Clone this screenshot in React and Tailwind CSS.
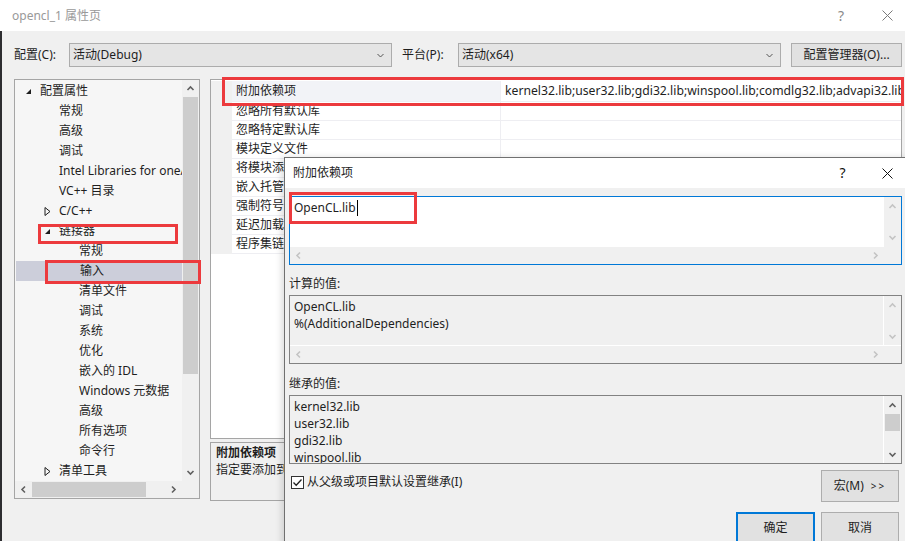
import React from "react";

const Chev = ({ dir = "down", color = "#606060", size = 9, w = 1.6 }) => {
  const pts = {
    up: "1.5,6 4.5,3 7.5,6",
    down: "1.5,3 4.5,6 7.5,3",
    left: "6,1.5 3,4.5 6,7.5",
    right: "3,1.5 6,4.5 3,7.5",
  }[dir];
  return (
    <svg width={size} height={size} viewBox="0 0 9 9">
      <polyline points={pts} fill="none" stroke={color} strokeWidth={w} />
    </svg>
  );
};

const XIcon = ({ color = "#333", size = 11 }) => (
  <svg width={size} height={size} viewBox="0 0 11 11">
    <path d="M0.5 0.5 L10.5 10.5 M10.5 0.5 L0.5 10.5" stroke={color} strokeWidth="1" fill="none" />
  </svg>
);

const TriOpen = () => (
  <svg width="7" height="7" viewBox="0 0 7 7">
    <polygon points="6,1 6,6 1,6" fill="#1e1e1e" />
  </svg>
);

const TriClosed = () => (
  <svg width="7" height="9" viewBox="0 0 7 9">
    <polygon points="1,0.5 6,4.5 1,8.5" fill="none" stroke="#1e1e1e" strokeWidth="1" />
  </svg>
);

const tree = [
  { t: "配置属性", l: 0, e: "open" },
  { t: "常规", l: 1 },
  { t: "高级", l: 1 },
  { t: "调试", l: 1 },
  { t: "Intel Libraries for oneAPI", l: 1 },
  { t: "VC++ 目录", l: 1 },
  { t: "C/C++", l: 1, e: "closed" },
  { t: "链接器", l: 1, e: "open" },
  { t: "常规", l: 2 },
  { t: "输入", l: 2, sel: true },
  { t: "清单文件", l: 2 },
  { t: "调试", l: 2 },
  { t: "系统", l: 2 },
  { t: "优化", l: 2 },
  { t: "嵌入的 IDL", l: 2 },
  { t: "Windows 元数据", l: 2 },
  { t: "高级", l: 2 },
  { t: "所有选项", l: 2 },
  { t: "命令行", l: 2 },
  { t: "清单工具", l: 1, e: "closed" },
];

const indent = ["pl-[10px]", "pl-[29px]", "pl-[49px]"];

const gridRows = [
  "附加依赖项",
  "忽略所有默认库",
  "忽略特定默认库",
  "模块定义文件",
  "将模块添加到程序集",
  "嵌入托管资源文件",
  "强制符号引用",
  "延迟加载的 DLL",
  "程序集链接资源",
];

export default function App() {
  return (
    <div className="relative h-[541px] w-[905px] overflow-hidden bg-[#f0f0f0] font-['Noto_Sans','Noto_Sans_CJK_SC',sans-serif] text-[12px] leading-[16px] text-[#1e1e1e]">
      {/* main title bar */}
      <div className="flex h-[31px] items-center bg-white pl-[12px]">
        <span className="text-[#999999]">opencl_1 属性页</span>
        <div className="ml-auto mr-[-5px] flex items-center">
          <span className="w-[46px] text-center text-[14px] text-[#8a8a8a]">?</span>
          <span className="flex w-[46px] justify-center">
            <XIcon color="#7a7a7a" />
          </span>
        </div>
      </div>

      {/* body */}
      <div className="flex h-[510px] flex-col border-l-[2px] border-[#2d2d30] pl-[12px]">
        {/* config row */}
        <div className="mt-[12px] flex h-[24px] items-center">
          <span className="w-[55px]">配置(C):</span>
          <div className="flex h-[24px] w-[323px] items-center border border-[#acacac] bg-[#e5e5e5] pl-[3px] pr-[6px]">
            <span>活动(Debug)</span>
            <span className="ml-auto">
              <Chev dir="down" color="#555" w={1} />
            </span>
          </div>
          <span className="ml-[10px] w-[56px]">平台(P):</span>
          <div className="flex h-[24px] w-[323px] items-center border border-[#acacac] bg-[#e5e5e5] pl-[3px] pr-[6px]">
            <span>活动(x64)</span>
            <span className="ml-auto">
              <Chev dir="down" color="#555" w={1} />
            </span>
          </div>
          <div className="ml-[10px] flex h-[24px] w-[111px] items-center justify-center border border-[#adadad] bg-[#e1e1e1]">
            配置管理器(O)...
          </div>
        </div>

        {/* content */}
        <div className="mt-[12px] flex">
          {/* tree */}
          <div className="flex h-[420px] w-[186px] flex-col border border-[#a5a5a5] bg-[#f6f6f6]">
            <div className="flex h-[401px]">
              <div className="w-[167px] overflow-hidden pt-[1px]">
                {tree.map((r, i) => (
                  <div
                    key={i}
                    className={
                      "flex h-[20px] items-center whitespace-nowrap " +
                      indent[r.l] +
                      (r.sel ? " ml-[1px] bg-[#ccceda]" : "")
                    }
                  >
                    <span className="flex w-[15px] shrink-0 items-center">
                      {r.e === "open" ? <TriOpen /> : r.e === "closed" ? <TriClosed /> : null}
                    </span>
                    <span className="shrink-0">{r.t}</span>
                  </div>
                ))}
              </div>
              <div className="flex w-[17px] flex-col bg-[#f0f0f0]">
                <div className="flex h-[17px] items-center justify-center">
                  <Chev dir="up" color="#606060" />
                </div>
                <div className="mx-[1px] h-[277px] bg-[#cdcdcd]" />
                <div className="mt-auto flex h-[17px] items-center justify-center">
                  <Chev dir="down" color="#606060" />
                </div>
              </div>
            </div>
            <div className="flex h-[17px] bg-[#f0f0f0]">
              <div className="flex w-[17px] items-center justify-center">
                <Chev dir="left" color="#606060" />
              </div>
              <div className="my-[1px] w-[114px] bg-[#cdcdcd]" />
              <div className="ml-auto mr-[17px] flex w-[17px] items-center justify-center">
                <Chev dir="right" color="#606060" />
              </div>
            </div>
          </div>

          {/* right column */}
          <div className="ml-[10px] flex w-[692px] flex-col">
            <div className="h-[360px] border border-[#a5a5a5] bg-white pt-[1px]">
              {gridRows.map((n, i) => (
                <div key={i} className={"flex " + (i === 0 ? "h-[21px]" : "h-[19px]")}>
                  <div className="w-[21px] bg-[#f0f0f0]" />
                  <div
                    className={
                      "flex w-[268px] items-center overflow-hidden whitespace-nowrap border-b border-[#eeeef2] pl-[4px] " +
                      (i === 0 ? "bg-[#f2f3f7]" : "")
                    }
                  >
                    {n}
                  </div>
                  <div className="flex flex-1 items-center overflow-hidden whitespace-nowrap border-b border-l border-[#eeeef2] pl-[4px] text-[12.2px]">
                    {i === 0
                      ? "kernel32.lib;user32.lib;gdi32.lib;winspool.lib;comdlg32.lib;advapi32.lib;shell32.lib;ole32.lib"
                      : ""}
                  </div>
                </div>
              ))}
            </div>
            <div className="mt-[3px] h-[59px] border border-[#a5a5a5] bg-[#f0f0f0] pl-[5px] pt-[1px] leading-[17px]">
              <div className="font-bold">附加依赖项</div>
              <div>指定要添加到链接命令行的其他项。</div>
            </div>
          </div>
        </div>
      </div>

      {/* red annotations on main window */}
      <div className="absolute left-[222px] top-[77px] h-[29px] w-[682px] border-[3px] border-[#ec3a3d]" />
      <div className="absolute left-[38px] top-[224px] h-[20px] w-[140px] border-[3px] border-[#ec3a3d]" />
      <div className="absolute left-[45px] top-[260px] h-[24px] w-[156px] border-[3px] border-[#ec3a3d]" />

      {/* dialog */}
      <div className="absolute left-[284px] top-[157px] h-[390px] w-[625px] border border-[#707070] bg-[#f0f0f0] shadow-[-3px_0_6px_rgba(0,0,0,0.12)]">
        <div className="flex h-[30px] items-center bg-white pl-[8px]">
          <span>附加依赖项</span>
          <div className="ml-auto mr-[-2px] flex items-center">
            <span className="w-[45px] text-center text-[14px] text-[#111]">?</span>
            <span className="flex w-[45px] justify-center">
              <XIcon color="#111" />
            </span>
          </div>
        </div>

        <div className="pl-[4px]">
          {/* edit box */}
          <div className="mt-[8px] flex h-[69px] w-[613px] flex-col border border-[#0078d7] bg-white">
            <div className="flex h-[50px]">
              <div className="flex flex-1 items-start pl-[4px] pt-[2px] leading-[17px]">
                <span>OpenCL.lib</span>
                <span className="ml-[1px] mt-[1px] h-[16px] w-[1px] bg-black" />
              </div>
              <div className="flex w-[17px] flex-col bg-[#f0f0f0]">
                <div className="mt-[1px] flex h-[17px] items-center justify-center">
                  <Chev dir="up" color="#c4c4c4" />
                </div>
                <div className="mb-[1px] mt-auto flex h-[17px] items-center justify-center">
                  <Chev dir="down" color="#c4c4c4" />
                </div>
              </div>
            </div>
            <div className="flex h-[17px] bg-[#f0f0f0]">
              <div className="flex w-[17px] items-center justify-center">
                <Chev dir="left" color="#c4c4c4" />
              </div>
              <div className="ml-auto mr-[17px] flex w-[17px] items-center justify-center">
                <Chev dir="right" color="#c4c4c4" />
              </div>
            </div>
          </div>

          {/* computed */}
          <div className="mt-[10px] h-[17px] leading-[17px]">计算的值:</div>
          <div className="mt-[3px] flex h-[69px] w-[613px] flex-col border border-[#828282] bg-[#f0f0f0]">
            <div className="flex h-[49px]">
              <div className="flex-1 border-r border-white pl-[4px] pt-[2px] leading-[17px]">
                <div>OpenCL.lib</div>
                <div>%(AdditionalDependencies)</div>
              </div>
              <div className="flex w-[17px] flex-col">
                <div className="mt-[1px] flex h-[17px] items-center justify-center">
                  <Chev dir="up" color="#c4c4c4" />
                </div>
                <div className="mt-auto flex h-[17px] items-center justify-center">
                  <Chev dir="down" color="#c4c4c4" />
                </div>
              </div>
            </div>
            <div className="flex h-[18px] border-t border-white">
              <div className="flex w-[17px] items-center justify-center">
                <Chev dir="left" color="#c4c4c4" />
              </div>
              <div className="ml-auto mr-[17px] flex w-[17px] items-center justify-center">
                <Chev dir="right" color="#c4c4c4" />
              </div>
            </div>
          </div>

          {/* inherited */}
          <div className="mt-[11px] h-[17px] leading-[17px]">继承的值:</div>
          <div className="mt-[3px] flex h-[69px] w-[613px] border border-[#828282] bg-[#f0f0f0]">
            <div className="flex-1 overflow-hidden border-r border-white pl-[4px] pt-[2px] leading-[17px]">
              <div>kernel32.lib</div>
              <div>user32.lib</div>
              <div>gdi32.lib</div>
              <div>winspool.lib</div>
            </div>
            <div className="flex w-[17px] flex-col">
              <div className="mt-[1px] flex h-[17px] items-center justify-center">
                <Chev dir="up" color="#606060" />
              </div>
              <div className="mx-[1px] h-[17px] bg-[#cdcdcd]" />
              <div className="mt-auto flex h-[17px] items-center justify-center">
                <Chev dir="down" color="#606060" />
              </div>
            </div>
          </div>

          {/* checkbox + macro */}
          <div className="mt-[6px] flex h-[32px] w-[613px] items-start">
            <div className="ml-[2px] mt-[4px] flex items-center">
              <span className="flex h-[13px] w-[13px] items-center justify-center border border-[#333] bg-white">
                <svg width="11" height="11" viewBox="0 0 11 11">
                  <polyline points="1.5,5.5 4.2,8.3 9.5,2.5" fill="none" stroke="#222" strokeWidth="1.3" />
                </svg>
              </span>
              <span className="ml-[3px]">从父级或项目默认设置继承(I)</span>
            </div>
            <div className="ml-auto mr-[3px] flex h-[32px] w-[78px] items-center justify-center border border-[#adadad] bg-[#e1e1e1]">
              <span>宏(M)</span>
              <span className="ml-[7px] text-[10px] tracking-[2px]">&gt;&gt;</span>
            </div>
          </div>

          {/* ok / cancel */}
          <div className="mr-[3px] mt-[10px] flex w-[610px] justify-end gap-[6px]">
            <div className="flex h-[32px] w-[79px] items-center justify-center border-2 border-[#0078d7] bg-[#e1e1e1]">
              确定
            </div>
            <div className="flex h-[32px] w-[78px] items-center justify-center border border-[#adadad] bg-[#e1e1e1]">
              取消
            </div>
          </div>
        </div>
      </div>

      {/* red annotation in dialog */}
      <div className="absolute left-[289px] top-[192px] h-[32px] w-[128px] border-[3px] border-[#ec3a3d]" />
    </div>
  );
}
